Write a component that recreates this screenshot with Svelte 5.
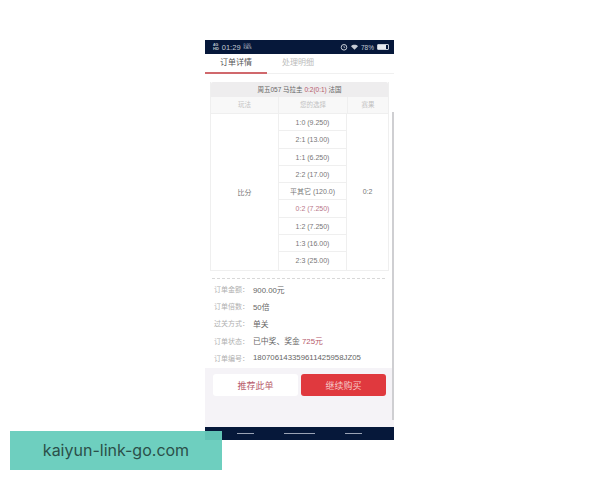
<script>
  const rows = ['1:0 (9.250)','2:1 (13.00)','1:1 (6.250)','2:2 (17.00)','平其它 (120.0)','0:2 (7.250)','1:2 (7.250)','1:3 (16.00)','2:3 (25.00)'];
  const info = [['订单金额：','900.00元'],['订单倍数：','50倍'],['过关方式：','单关'],['订单状态：','已中奖、奖金 ',"725元"],['订单编号：','180706143359611425958JZ05']];
</script>

<div class="page">
  <div class="phone">
    <div class="status">
      <span class="sig">4G<br/>HD</span><span class="time">01:29</span><span class="speed">0.00<br/>KB/S</span>
      <span class="spacer"></span>
      <svg class="alarm" viewBox="0 0 8 8" width="8" height="8"><circle cx="4" cy="4.3" r="2.8" fill="none" stroke="#c4cad4" stroke-width="1"/><path d="M4 2.8V4.4H5.2" fill="none" stroke="#c4cad4" stroke-width=".7"/></svg>
      <svg class="wifi" viewBox="0 0 8 6" width="7" height="6"><path d="M0 2 4 6 8 2C6 0 2 0 0 2Z" fill="#c4cad4"/></svg>
      <span class="pct">78%</span>
      <span class="batt"><span class="level"></span></span>
    </div>
    <div class="tabs">
      <div class="tab active">订单详情</div>
      <div class="tab">处理明细</div>
    </div>
    <div class="body">
      <div class="scroll"></div>
      <div class="table">
        <div class="title">周五057 马拉圭 <em>0:2(0:1)</em> 法国</div>
        <div class="head"><div>玩法</div><div>您的选择</div><div>赛果</div></div>
        <div class="main">
          <div class="cell">比分</div>
          <div class="picks">
            {#each rows as r, i}
              <div class="pick" class:red={i === 5}>{r}</div>
            {/each}
          </div>
          <div class="cell">0:2</div>
        </div>
      </div>
      <div class="dash"></div>
      <div class="info">
        {#each info as row}
          <div class="line"><span class="k">{row[0]}</span><span class="v">{row[1]}{#if row[2]}<em>{row[2]}</em>{/if}</span></div>
        {/each}
      </div>
    </div>
    <div class="foot">
      <button class="btn white">推荐此单</button>
      <button class="btn redbtn">继续购买</button>
    </div>
    <div class="nav"><i class="a"></i><i class="b"></i><i class="a"></i></div>
  </div>
  <div class="mark">kaiyun-link-go.com</div>
</div>

<style>
  :global(body) { margin: 0; background: #fff; }
  .page { width: 600px; height: 480px; position: relative; padding: 40px 0 0 205px; box-sizing: border-box; overflow: hidden; font-family: "Liberation Sans", "Noto Sans CJK SC", sans-serif; }
  .phone { width: 189px; height: 400px; display: flex; flex-direction: column; background: #fff; }
  .status { height: 14px; background: #06183a; display: flex; align-items: center; color: #c4cad4; padding: 0 5px 0 8px; gap: 3px; flex: none; box-sizing: border-box; }
  .sig { font: 700 4px/4px "Liberation Sans", sans-serif; }
  .time { font: 7.5px "Liberation Sans", sans-serif; }
  .speed { font: 3.5px/3.5px "Liberation Sans", sans-serif; }
  .spacer { flex: 1; }
  .pct { font: 6.5px "Liberation Sans", sans-serif; }
  .batt { width: 12px; height: 6px; border: 1px solid #c4cad4; border-radius: 1px; box-sizing: border-box; display: block; }
  .level { display: block; width: 78%; height: 100%; background: #e8ebf0; }
  .tabs { height: 20px; display: flex; flex: none; border-bottom: 1px solid #f0f0f0; box-sizing: border-box; }
  .tab { width: 62px; text-align: center; font-size: 8px; line-height: 18px; color: #bbb; box-sizing: border-box; }
  .active { color: #555; border-bottom: 2px solid #d0686c; height: 20px; }
  .body { flex: none; height: 294px; position: relative; padding: 8px 5px 0; box-sizing: border-box; }
  .scroll { position: absolute; right: 0; top: 38px; width: 2px; height: 308px; background: #cfcfd2; z-index: 2; }
  .table { border: 1px solid #efefef; border-top: 0; width: 179px; box-sizing: border-box; }
  .title { height: 15px; background: #eeedee; text-align: center; font-size: 6.5px; line-height: 15px; color: #666; border-radius: 2px 2px 0 0; }
  em { font-style: normal; color: #b5586a; }
  .head { display: grid; grid-template-columns: 67px 69px 1fr; height: 17px; background: #f8f8f8; border-bottom: 1px solid #efefef; box-sizing: border-box; }
  .head div { font-size: 6.5px; line-height: 16px; text-align: center; color: #c2c2c2; border-left: 1px solid #efefef; }
  .head div:first-child { border-left: 0; }
  .main { display: grid; grid-template-columns: 67px 69px 1fr; }
  .cell { display: flex; align-items: center; justify-content: center; font-size: 7px; color: #777; }
  .picks { border-left: 1px solid #efefef; border-right: 1px solid #efefef; }
  .pick { height: 17.3px; line-height: 17px; text-align: center; font-size: 7px; color: #777; border-bottom: 1px solid #efefef; box-sizing: border-box; }
  .pick:last-child { border-bottom: 0; }
  .red { color: #b9788a; }
  .dash { border-top: 1px dashed #d8d8d8; margin: 7px 2px 0 2px; width: 173px; }
  .info { padding: 2px 0 0 4px; }
  .line { height: 17.1px; display: flex; align-items: center; font-size: 7px; }
  .k { width: 39px; color: #b0b0b0; flex: none; }
  .v { color: #666; font-size: 7.8px; white-space: nowrap; }
  .foot { height: 59px; flex: none; background: #f5f3f7; display: flex; gap: 4px; padding: 6px 0 0 8px; box-sizing: border-box; }
  .btn { width: 85px; height: 22px; border: 0; border-radius: 3px; font-size: 9px; font-family: "Liberation Sans", "Noto Sans CJK SC", sans-serif; padding: 0; }
  .white { background: #fff; color: #b9606e; }
  .redbtn { background: #e0393e; color: #f6c9c9; margin-left: -1px; }
  .nav { height: 13px; flex: none; background: #06183a; display: flex; align-items: center; box-sizing: border-box; padding: 0 0 0 32px; }
  .nav i { height: 1px; background: #9aa3b5; display: block; }
  .a { width: 17px; }
  .b { width: 31px; margin: 0 30px 0 30px; }
  .mark { position: absolute; left: 10px; top: 431px; width: 212px; height: 39px; background: rgba(102, 204, 188, .95); color: #2b4f49; font: 16px/39px Inter, "Liberation Sans", sans-serif; text-align: center; }
</style>
